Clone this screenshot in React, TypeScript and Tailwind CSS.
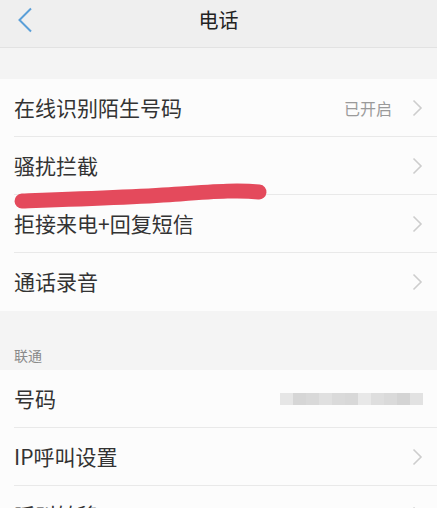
const font = { fontFamily: '"Noto Sans CJK SC", "Noto Sans", sans-serif' };

type Row = { label: string; value?: string; masked?: boolean; arrow?: boolean };

const callRows: Row[] = [
  { label: "在线识别陌生号码", value: "已开启", arrow: true },
  { label: "骚扰拦截", arrow: true },
  { label: "拒接来电+回复短信", arrow: true },
  { label: "通话录音", arrow: true },
];

const simRows: Row[] = [
  { label: "号码", masked: true },
  { label: "IP呼叫设置", arrow: true },
  { label: "呼叫转移", arrow: true },
];

// pixelated phone number
const shades = ["#e6e6e6", "#d6d6d6", "#d9d9d9", "#e0e0e0", "#dadada", "#d8d8d8", "#e8e8e8", "#dedede", "#dadada", "#d4d4d4", "#e2e2e2"];

const Arrow = () => (
  <svg width="11" height="18" viewBox="0 0 11 18" className="shrink-0">
    <path d="M1.5 1.5 L9 9 L1.5 16.5" fill="none" stroke="#cdcdcd" strokeWidth="1.6" />
  </svg>
);

const SettingRow = ({ row, last }: { row: Row; last?: boolean }) => (
  <div className="pl-[14px]">
    <div className={`flex h-[58px] items-center pr-[14px] ${last ? "" : "border-b border-[#e9e9e9]"}`}>
      <span className="flex-1 text-[21px] text-[#333]">{row.label}</span>
      {row.value && <span className="mr-[20px] text-[16px] text-[#9a9a9a]">{row.value}</span>}
      {row.masked && (
        <div className="flex h-[12px]">
          {shades.map((c, i) => (
            <div key={i} className="h-full w-[13px]" style={{ backgroundColor: c }} />
          ))}
        </div>
      )}
      {row.arrow && <Arrow />}
    </div>
  </div>
);

const App = () => {
  return (
    <div className="relative h-[508px] w-[437px] overflow-hidden bg-[#f4f4f4]" style={font}>
      <div className="relative flex h-[48px] items-center justify-center border-b border-[#e2e2e2] bg-[#efefef] pb-[8px]">
        <svg className="absolute left-[17px] top-[7px]" width="16" height="26" viewBox="0 0 16 26">
          <path d="M14 1.5 L2.5 13 L14 24.5" fill="none" stroke="#5a9fd8" strokeWidth="2" />
        </svg>
        <h1 className="text-[20px] text-[#222]">电话</h1>
      </div>

      <div className="mt-[31px] bg-[#fcfcfc]">
        {callRows.map((r, i) => (
          <SettingRow key={r.label} row={r} last={i === callRows.length - 1} />
        ))}
      </div>

      <div className="flex h-[59px] items-end pb-[4px] pl-[14px] text-[14px] text-[#8a8a8a]">联通</div>

      <div className="bg-[#fcfcfc]">
        {simRows.map((r) => (
          <SettingRow key={r.label} row={r} />
        ))}
      </div>

      {/* red marker stroke over the list */}
      <svg className="absolute left-0 top-0" width="437" height="508" viewBox="0 0 437 508">
        <path
          d="M22 201 C 80 199, 140 197, 180 194 S 240 190, 259 192"
          fill="none"
          stroke="#e44a5c"
          strokeWidth="15"
          strokeLinecap="round"
        />
      </svg>
    </div>
  );
};

export default App;
